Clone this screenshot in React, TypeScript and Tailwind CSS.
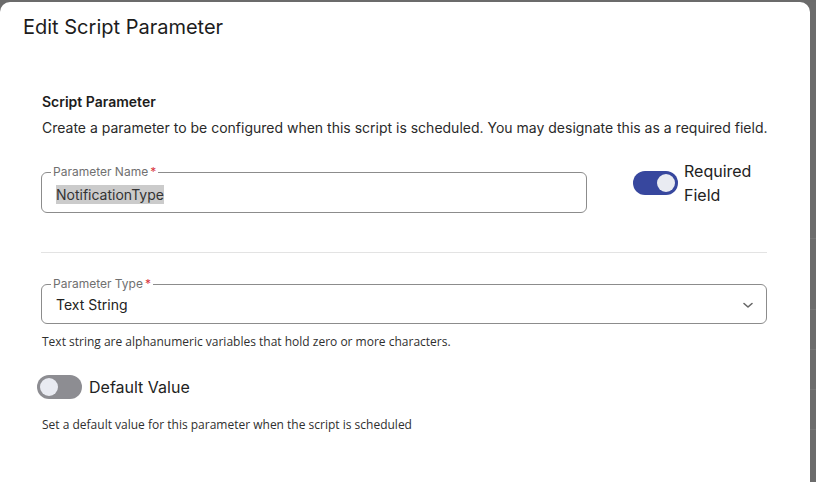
import React from "react";

const inter = { fontFamily: "Inter, 'Noto Sans', sans-serif" };
const openSans = { fontFamily: "'Open Sans', 'Noto Sans', sans-serif" };

function Toggle({ on }: { on: boolean }) {
  return (
    <div
      className={`flex h-[24px] w-[45px] shrink-0 items-center rounded-full px-[3px] ${
        on ? "justify-end bg-[#37479e]" : "justify-start bg-[#8d8d92]"
      }`}
    >
      <div className="h-[18px] w-[18px] rounded-full bg-[#e9ebf2]" />
    </div>
  );
}

export default function App() {
  return (
    <div className="flex h-[482px] w-[816px] overflow-hidden bg-[#6b6b6b] pt-[2px]">
      <div
        className="h-[600px] w-[810px] shrink-0 rounded-t-[10px] bg-white text-[#1c1c1c]"
        style={inter}
      >
        <div className="pl-[23px] pt-[11px] text-[20px] leading-[28px] font-normal">Edit Script Parameter</div>

        <div className="pl-[41px] pr-[43px]">
          <div className="ml-[1px] mt-[51px] text-[14px] font-semibold leading-[20px]">Script Parameter</div>
          <div className="ml-[1px] mt-[6px] text-[14px] leading-[20px] text-[#2a2a2a] whitespace-nowrap">
            Create a parameter to be configured when this script is scheduled. You may designate this as a required field.
          </div>

          <div className="mt-[21px] flex items-start">
            <div className="relative mt-[13px] flex h-[41px] w-[546px] shrink-0 items-center rounded-[6px] border border-[#8c8c8c] pl-[14px] pt-[3px]">
              <div className="absolute left-[9px] top-[-8px] flex bg-white px-[2px] text-[12px] leading-[14px] text-[#707070]">
                Parameter Name<span className="ml-[2px] text-[#d9363e]">*</span>
              </div>
              <span className="bg-[#cbcbcb] text-[14px] leading-[19px] text-[#333]">NotificationType</span>
            </div>
            <div className="ml-[46px] mt-[12px]">
              <Toggle on />
            </div>
            <div className="ml-[6px] w-[83px] text-[16px] leading-[24px] text-[#222]">Required Field</div>
          </div>

          <div className="mt-[39px] border-t border-[#e3e3e3]" />

          <div className="relative mt-[31px] flex h-[40px] items-center justify-between rounded-[6px] border border-[#8c8c8c] pl-[14px] pr-[10px] pt-[1px]">
            <div className="absolute left-[9px] top-[-8px] flex bg-white px-[2px] text-[12px] leading-[14px] text-[#707070]">
              Parameter Type<span className="ml-[2px] text-[#d9363e]">*</span>
            </div>
            <span className="text-[14px] leading-[20px] text-[#222]">Text String</span>
            <svg width="16" height="16" viewBox="0 0 16 16" fill="none" stroke="#666" strokeWidth="1.6" strokeLinecap="round" strokeLinejoin="round">
              <path d="M4 6.5 L8 10 L12 6.5" />
            </svg>
          </div>

          <div className="ml-[1px] mt-[10px] text-[12px] leading-[16px] text-[#2f2f2f]" style={openSans}>
            Text string are alphanumeric variables that hold zero or more characters.
          </div>

          <div className="-ml-[4px] mt-[25px] flex items-center gap-[7px]">
            <Toggle on={false} />
            <span className="text-[16px] leading-[24px] text-[#222]">Default Value</span>
          </div>

          <div className="ml-[1px] mt-[18px] text-[12px] leading-[16px] text-[#2f2f2f]" style={openSans}>
            Set a default value for this parameter when the script is scheduled
          </div>
        </div>
      </div>
      <div className="flex h-full flex-1 flex-col bg-[#6c6c6c]">
        <div className="mt-[236px] border-t border-[#767676]" />
        <div className="mt-[70px] border-t border-[#767676]" />
        <div className="mt-[39px] border-t border-[#767676]" />
        <div className="mt-[39px] border-t border-[#767676]" />
        <div className="mt-[39px] border-t border-[#767676]" />
      </div>
    </div>
  );
}
